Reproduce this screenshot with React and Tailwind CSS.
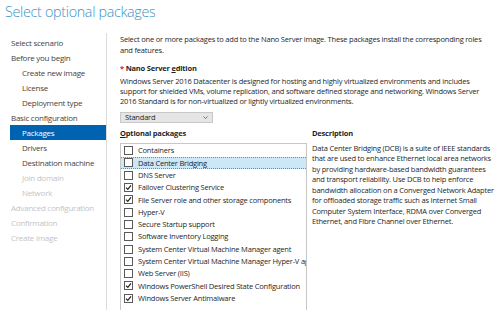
import React from "react";

const navItems = [
  { label: "Select scenario", indent: false, state: "normal" },
  { label: "Before you begin", indent: false, state: "normal" },
  { label: "Create new image", indent: true, state: "normal" },
  { label: "License", indent: true, state: "normal" },
  { label: "Deployment type", indent: true, state: "normal" },
  { label: "Basic configuration", indent: false, state: "normal" },
  { label: "Packages", indent: true, state: "selected" },
  { label: "Drivers", indent: true, state: "normal" },
  { label: "Destination machine", indent: true, state: "normal" },
  { label: "Join domain", indent: true, state: "disabled" },
  { label: "Network", indent: true, state: "disabled" },
  { label: "Advanced configuration", indent: false, state: "disabled" },
  { label: "Confirmation", indent: false, state: "disabled" },
  { label: "Create image", indent: false, state: "disabled" },
];

const packages = [
  { label: "Containers", checked: false },
  { label: "Data Center Bridging", checked: false, focused: true },
  { label: "DNS Server", checked: false },
  { label: "Failover Clustering Service", checked: true },
  { label: "File Server role and other storage components", checked: true },
  { label: "Hyper-V", checked: false },
  { label: "Secure Startup support", checked: false },
  { label: "Software Inventory Logging", checked: false },
  { label: "System Center Virtual Machine Manager agent", checked: false },
  { label: "System Center Virtual Machine Manager Hyper-V agent", checked: false },
  { label: "Web Server (IIS)", checked: false },
  { label: "Windows PowerShell Desired State Configuration", checked: true },
  { label: "Windows Server Antimalware", checked: true },
];

function Check({ checked }) {
  return (
    <span className="w-[9px] h-[9px] shrink-0 border border-[#5a5a5a] bg-white flex items-center justify-center">
      {checked && (
        <svg width="7" height="7" viewBox="0 0 7 7">
          <path d="M1 3.6 L2.8 5.4 L6 1.4" fill="none" stroke="#222" strokeWidth="1.2" />
        </svg>
      )}
    </span>
  );
}

export default function App() {
  return (
    <div
      className="w-[500px] h-[310px] overflow-hidden bg-white text-[#1f1f1f]"
      style={{ fontFamily: '"Open Sans", "Noto Sans", sans-serif' }}
    >
      <h1 className="h-[33px] pl-[5px] text-[14.3px] tracking-[-0.3px] leading-[24px] font-light text-[#3a92c4]">
        Select optional packages
      </h1>
      <div className="flex h-[277px]">
        <nav className="w-[107px] shrink-0 border-r border-[#dcdcdc] pt-[2px] pl-[10px]">
          {navItems.map((it) => (
            <div
              key={it.label}
              className={
                "h-[15px] leading-[15px] text-[8px] tracking-[-0.25px] whitespace-nowrap " +
                (it.indent ? "pl-[12px] " : "pl-[1px] ") +
                (it.state === "selected"
                  ? "bg-[#0063b1] text-white"
                  : it.state === "disabled"
                  ? "text-[#c4c4c4]"
                  : "text-[#444]")
              }
            >
              {it.label}
            </div>
          ))}
        </nav>
        <main className="flex-1 pl-[13px] pt-[1px] text-[7.5px] tracking-[-0.2px] leading-[10.5px] whitespace-nowrap">
          <p>
            Select one or more packages to add to the Nano Server image. These packages install the corresponding roles
            <br />
            and features.
          </p>
          <p className="mt-[8px] font-bold">
            <span className="text-[#e81123]">*</span> Nano Server <span className="underline">e</span>dition
          </p>
          <p className="mt-[2px] leading-[10px]">
            Windows Server 2016 Datacenter is designed for hosting and highly virtualized environments and includes
            <br />
            support for shielded VMs, volume replication, and software defined storage and networking. Windows Server
            <br />
            2016 Standard is for non-virtualized or lightly virtualized environments.
          </p>
          <div className="mt-[6px] w-[93px] h-[11px] bg-[#e5e5e5] border border-[#c8c8c8] flex items-center justify-between pl-[4px] pr-[4px]">
            <span>Standard</span>
            <svg width="5" height="3" viewBox="0 0 5 3">
              <path d="M0.5 0.5 L2.5 2.5 L4.5 0.5" fill="none" stroke="#555" strokeWidth="0.8" />
            </svg>
          </div>
          <div className="mt-[5px] flex gap-[5px]">
            <div className="w-[187px] shrink-0">
              <div className="font-bold h-[15px]">
                <span className="underline">O</span>ptional packages
              </div>
              <div className="border border-[#c8c8c8] h-[200px] pt-[1px] overflow-hidden">
                {packages.map((p) => (
                  <div
                    key={p.label}
                    className={
                      "h-[12.3px] flex items-center gap-[5px] pl-[3px] overflow-hidden " +
                      (p.focused ? "bg-[#cce8f7] border-y border-dotted border-[#3c9ad6]" : "")
                    }
                  >
                    <Check checked={p.checked} />
                    <span>{p.label}</span>
                  </div>
                ))}
              </div>
            </div>
            <div className="flex-1">
              <div className="font-bold h-[15px]">Description</div>
              <p className="leading-[10.5px]">
                Data Center Bridging (DCB) is a suite of IEEE standards
                <br />
                that are used to enhance Ethernet local area networks
                <br />
                by providing hardware-based bandwidth guarantees
                <br />
                and transport reliability. Use DCB to help enforce
                <br />
                bandwidth allocation on a Converged Network Adapter
                <br />
                for offloaded storage traffic such as Internet Small
                <br />
                Computer System Interface, RDMA over Converged
                <br />
                Ethernet, and Fibre Channel over Ethernet.
              </p>
            </div>
          </div>
        </main>
      </div>
    </div>
  );
}
